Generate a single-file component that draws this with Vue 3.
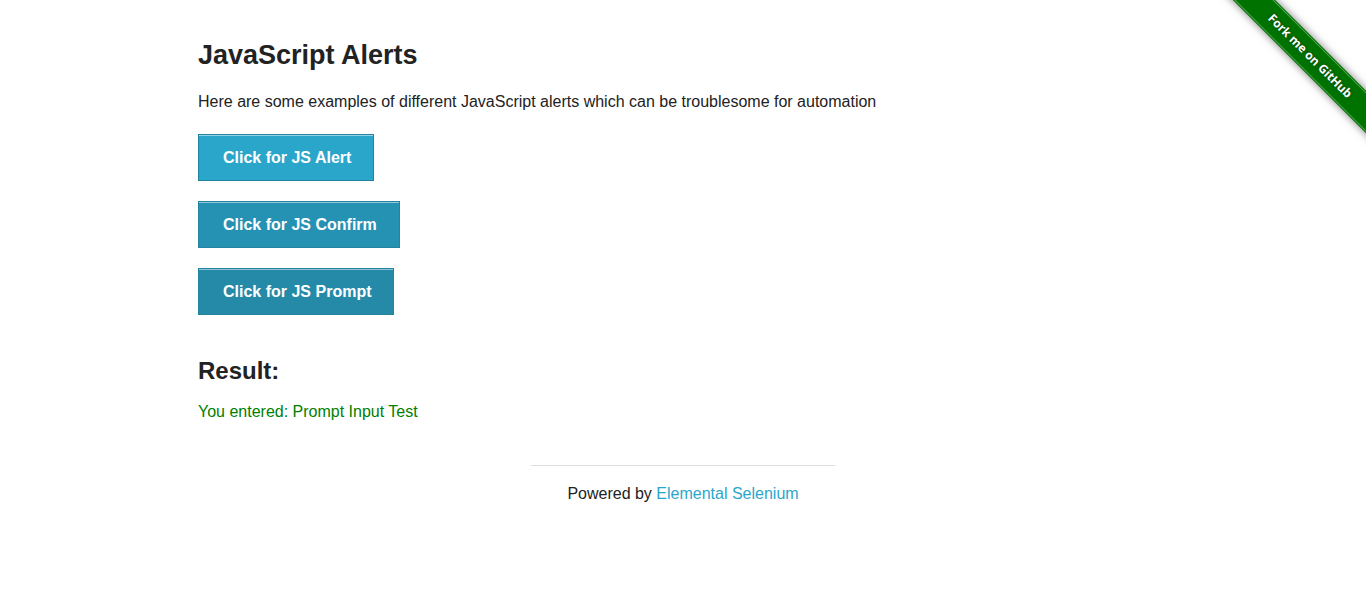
<script setup>
import { ref } from 'vue'

const result = ref('You entered: Prompt Input Test')

function jsAlert() {
  window.alert('I am a JS Alert')
  result.value = 'You successfully clicked an alert'
}

function jsConfirm() {
  const ok = window.confirm('I am a JS Confirm')
  result.value = ok ? 'You clicked: Ok' : 'You clicked: Cancel'
}

function jsPrompt() {
  const text = window.prompt('I am a JS prompt')
  result.value = 'You entered: ' + text
}
</script>

<template>
  <div class="page">
    <div class="corner">
      <a class="ribbon" href="#"><span>Fork me on GitHub</span></a>
    </div>
    <main class="row">
      <h3>JavaScript Alerts</h3>
      <p>Here are some examples of different JavaScript alerts which can be troublesome for automation</p>
      <ul class="actions">
        <li><button type="button" class="alert" @click="jsAlert">Click for JS Alert</button></li>
        <li><button type="button" class="confirm" @click="jsConfirm">Click for JS Confirm</button></li>
        <li><button type="button" class="prompt" @click="jsPrompt">Click for JS Prompt</button></li>
      </ul>
      <h4>Result:</h4>
      <p class="result">{{ result }}</p>
    </main>
    <footer class="row">
      <div class="powered">
        <hr>
        <div>Powered by <a href="#">Elemental Selenium</a></div>
      </div>
    </footer>
  </div>
</template>

<style>
body {
  background: #fff;
}
</style>

<style scoped>
.page {
  position: relative;
  padding-top: 36px;
  overflow: hidden;
  color: #222;
  font-family: "Liberation Sans", Arial, sans-serif;
  font-size: 16px;
  line-height: 26px;
}

.row {
  box-sizing: border-box;
  max-width: 1000px;
  margin: 0 auto;
  padding: 0 15px;
}

h3 {
  margin: 0 0 15px;
  font-size: 27px;
  line-height: 38px;
}

h4 {
  margin: 0 0 12px;
  font-size: 24px;
  line-height: 32px;
}

p {
  margin: 0 0 19px;
}

.actions {
  display: flex;
  flex-direction: column;
  align-items: flex-start;
  gap: 20px;
  margin: 0 0 40px;
  padding: 0;
  list-style: none;
}

.actions li {
  display: flex;
}

button {
  margin: 0;
  padding: 14px 22px 13px 24px;
  border: 1px solid #2284a1;
  border-radius: 0;
  box-shadow: inset 0 1px 0 rgba(255, 255, 255, 0.5);
  color: #fff;
  font-family: inherit;
  font-size: 16px;
  font-weight: bold;
  line-height: 18px;
  cursor: pointer;
}

.alert {
  background: #2ba6cb;
}

.confirm {
  background: #2592b4;
}

.prompt {
  background: #258aa8;
}

.result {
  color: green;
}

.powered {
  width: 304px;
  margin: 40px auto 0;
  text-align: center;
}

hr {
  margin: 0 0 15px;
  border: 0;
  border-top: 1px solid #ddd;
}

.powered a {
  color: #2ba6cb;
  text-decoration: none;
}

.corner {
  position: absolute;
  top: 0;
  right: 0;
  width: 149px;
  height: 149px;
  overflow: hidden;
}

.ribbon {
  position: absolute;
  top: 41px;
  left: -22px;
  width: 230px;
  padding: 1px 0;
  background: #007200;
  box-shadow: 0 0 8px rgba(0, 0, 0, 0.5);
  color: #fff;
  font-family: "Open Sans", "Noto Sans", sans-serif;
  font-size: 12px;
  font-weight: bold;
  line-height: 26px;
  text-align: center;
  text-decoration: none;
  text-shadow: 0 0 3px rgba(0, 0, 0, 0.5);
  transform: rotate(45deg);
}

.ribbon span {
  display: block;
  border-top: 1px solid #55a655;
  border-bottom: 1px solid #55a655;
}
</style>
